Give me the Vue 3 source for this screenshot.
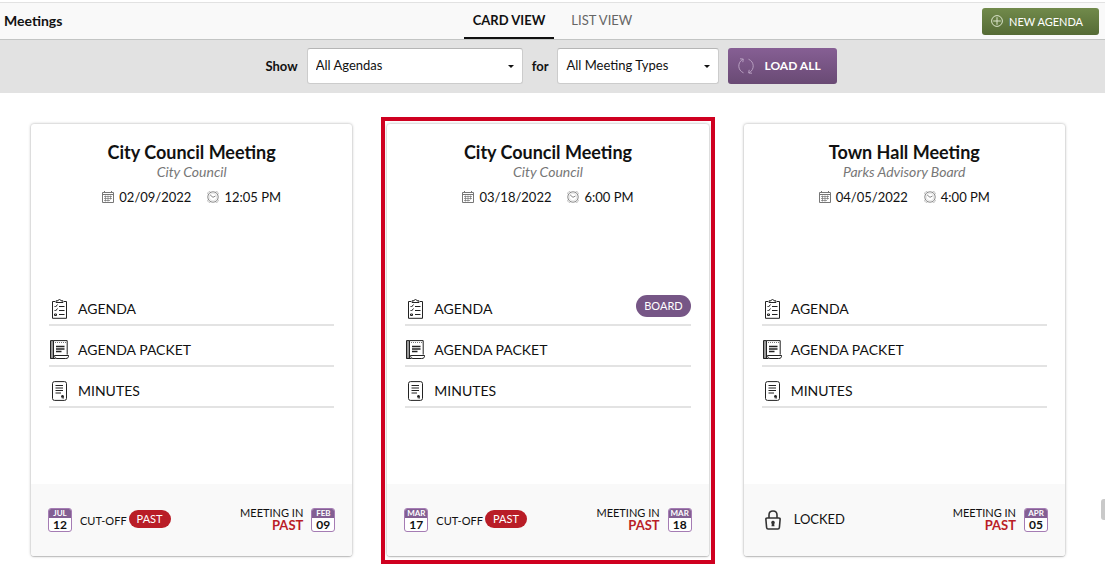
<script setup>
import { ref } from 'vue'

const view = ref('card')
const agendaFilter = ref('All Agendas')
const typeFilter = ref('All Meeting Types')

const cards = [
  { id: 1, title: 'City Council Meeting', group: 'City Council', date: '02/09/2022', time: '12:05 PM', cutoff: { month: 'JUL', day: '12' }, meeting: { month: 'FEB', day: '09' } },
  { id: 2, title: 'City Council Meeting', group: 'City Council', date: '03/18/2022', time: '6:00 PM', board: true, selected: true, cutoff: { month: 'MAR', day: '17' }, meeting: { month: 'MAR', day: '18' } },
  { id: 3, title: 'Town Hall Meeting', group: 'Parks Advisory Board', date: '04/05/2022', time: '4:00 PM', locked: true, meeting: { month: 'APR', day: '05' } },
]
</script>

<template>
  <div class="page">
    <header class="topbar">
      <h1>Meetings</h1>
      <nav class="tabs">
        <button type="button" class="tab" :class="{ active: view === 'card' }" @click="view = 'card'">CARD VIEW</button>
        <button type="button" class="tab" :class="{ active: view === 'list' }" @click="view = 'list'">LIST VIEW</button>
      </nav>
      <div class="actions">
        <button type="button" class="new-agenda">
          <svg width="12" height="12" viewBox="0 0 12 12" fill="none" stroke="#dce5cc">
            <circle cx="6" cy="6" r="5.4" />
            <path d="M6 2.2v7.6M2.2 6h7.6" />
          </svg>
          NEW AGENDA
        </button>
      </div>
    </header>

    <form class="filters" @submit.prevent>
      <label for="agenda-filter">Show</label>
      <span class="select wide">
        <select id="agenda-filter" v-model="agendaFilter"><option>All Agendas</option></select>
        <svg width="6" height="3" viewBox="0 0 6 3"><path d="M0 0h6L3 3z" fill="#111" /></svg>
      </span>
      <label for="type-filter">for</label>
      <span class="select">
        <select id="type-filter" v-model="typeFilter"><option>All Meeting Types</option></select>
        <svg width="6" height="3" viewBox="0 0 6 3"><path d="M0 0h6L3 3z" fill="#111" /></svg>
      </span>
      <button type="submit" class="load-all">
        <svg width="18" height="18" viewBox="0 0 18 18" fill="none" stroke="#b79fc0">
          <path d="M6.500 15.800C.4 13.300.2 5.200 6 2.200M3 1.800l3.300.2-.5 3.200M11.500 2.200c6.100 2.500 6.300 10.600.5 13.600M15 16.200l-3.300-.2.5-3.200" />
        </svg>
        LOAD ALL
      </button>
    </form>

    <main class="cards">
      <article v-for="card in cards" :key="card.id" class="card" :class="{ selected: card.selected }">
        <div class="head">
          <h2>{{ card.title }}</h2>
          <p class="group">{{ card.group }}</p>
          <p class="when">
            <span>
              <svg width="12" height="12" viewBox="0 0 12 12" fill="none" stroke="#777">
                <path d="M.5 1.500h11v10h-11zM.5 3.500h11M2.500 0v2M9.500 0v2" />
                <path d="M2 5.500h8M2 7.500h8M2 9.500h6M3.500 4.500v6M6 4.500v6M8.500 4.500v4" stroke-width=".7" />
              </svg>
              {{ card.date }}
            </span>
            <span>
              <svg width="12" height="12" viewBox="0 0 12 12" fill="none" stroke="#888">
                <circle cx="6" cy="6" r="5.200" />
                <circle cx="6" cy="6" r="3.800" stroke="#ddd" stroke-width=".8" />
                <path d="M3.200 4 6 6.300l2.500-1.300" />
                <path d="M.6 3.200 1 1.600l.8-.8 1.500-.2M11.400 3.200 11 1.600l-.8-.8-1.500-.2M.6 8.800l.4 1.600.8.800 1.500.2M11.400 8.800l-.4 1.600-.8.800-1.500.2" stroke="#bbb" />
              </svg>
              {{ card.time }}
            </span>
          </p>
        </div>

        <ul class="docs">
          <li>
            <a href="#agenda">
              <svg width="20" height="20" viewBox="0 0 20 20" fill="none" stroke="#222">
                <path d="M6 2.500H3.500v16.800h14V2.500H15M7 3.500V1.800h2c.1-1.700 2.900-1.700 3 0h2v1.700z" />
                <path d="M5.500 7l1 1 2-2.500M5.500 11l1 1 2-2.500M5.500 15h2v1.500h-2zM10 7.500h5.500M10 11.500h5.500M10 15.500h5.500" />
              </svg>
              AGENDA
            </a>
            <span v-if="card.board" class="board">BOARD</span>
          </li>
          <li>
            <a href="#packet">
              <svg width="20" height="20" viewBox="0 0 20 20" fill="none" stroke="#222">
                <path d="M1.500.6h3v17.800h-3z" fill="#999" />
                <path d="M4.500.6h13.700v14M1.500 18.500h5M5.500 15.500h14.200c0 2-1 3-3 3H8c-1.600 0-2.500-1.400-2.500-3z" />
                <path d="M6 2.500h11" stroke-dasharray="1 1" stroke="#777" />
                <path d="M7 6.500h8.500M7 9h8.500M7 11.500h5.500" stroke-width="1.400" />
              </svg>
              AGENDA PACKET
            </a>
          </li>
          <li>
            <a href="#minutes">
              <svg width="20" height="20" viewBox="0 0 20 20" fill="none" stroke="#222">
                <rect x="3.500" y=".6" width="14" height="18.800" rx="2" />
                <path d="M6.500 4.500H14M6.500 7H14M6.500 9.500H14M6.500 12H12" />
                <circle cx="13.500" cy="15.200" r="1.300" fill="#222" stroke="none" />
                <path d="M13 15.500v1.800l.7-.5.8.5v-1.800" stroke-width=".7" />
              </svg>
              MINUTES
            </a>
          </li>
        </ul>

        <footer class="foot">
          <div v-if="card.locked" class="locked">
            <svg width="16" height="20" viewBox="0 0 16 20" fill="none" stroke="#333" stroke-width="1.600">
              <path d="M2.200 8h11.600c1 0 1.400.5 1.300 1.500l-.7 8c-.1 1-.6 1.500-1.500 1.500H3.100c-.9 0-1.400-.5-1.500-1.500l-.7-8C.8 8.500 1.200 8 2.200 8zM4 8V5C4 2 5.600 1 8 1s4 1 4 4v3" />
              <path d="M8 10.800a1.900 1.900 0 0 1 1.200 3.300l.3 2.200h-3l.3-2.200A1.900 1.900 0 0 1 8 10.800z" fill="#333" stroke="none" />
            </svg>
            <span>LOCKED</span>
          </div>
          <div v-else class="cutoff">
            <span class="cal"><b>{{ card.cutoff.month }}</b><i>{{ card.cutoff.day }}</i></span>
            <span class="cut-text">CUT-OFF</span>
            <span class="past">PAST</span>
          </div>
          <div class="meeting">
            <p>MEETING IN<strong>PAST</strong></p>
            <span class="cal"><b>{{ card.meeting.month }}</b><i>{{ card.meeting.day }}</i></span>
          </div>
        </footer>
      </article>
    </main>
    <div class="thumb"></div>
  </div>
</template>

<style>
body { background: #fff; }
</style>

<style scoped>
* { box-sizing: border-box; margin: 0; padding: 0; }
.page { position: relative; font-family: Lato, "Open Sans", sans-serif; font-size: 14px; color: #111; padding-top: 2px; }
button, select { font-family: inherit; border: 0; cursor: pointer; }
svg { flex: none; }
.topbar { display: grid; grid-template-columns: 1fr auto 1fr; align-items: center; height: 38px; background: #f9f9f9; border-top: 1px solid #e2e2e2; border-bottom: 1px solid #c3c5c4; }
h1 { font-size: 14px; line-height: 18px; font-weight: 700; padding-left: 4px; }
.tabs { display: flex; gap: 8px; height: 36px; }
.tab { padding: 0 9px; font-size: 13px; background: none; border-bottom: 2px solid transparent; color: #666; }
.tab.active { color: #111; border-color: #111; font-weight: 700; }
.actions { display: flex; justify-content: flex-end; padding-right: 6px; }
.new-agenda { display: flex; align-items: center; gap: 6px; width: 117px; height: 27px; padding: 0 9px; font-size: 11px; color: #fff; border-radius: 3px; background: linear-gradient(#718a4b, #556b35); }
.filters { display: flex; align-items: center; justify-content: center; height: 53px; padding: 0 2px 2px 0; background: #e2e2e2; }
label { font-weight: 700; font-size: 13px; }
.select { position: relative; width: 162px; margin: 0 9px; }
.select.wide { width: 216px; }
.select select { display: block; appearance: none; width: 100%; height: 36px; padding: 0 8px 2px; font-size: 13px; color: #111; background: #fff; border: 1px solid #ccc; border-top-color: #b5b5b5; border-radius: 3px; }
.select svg { position: absolute; right: 9px; top: 17px; pointer-events: none; }
.load-all { display: flex; align-items: center; gap: 9px; width: 109px; height: 36px; padding: 0 9px; font-size: 12px; font-weight: 700; color: #fff; border-radius: 3px; background: linear-gradient(#865f94, #694a74); }
.cards { display: grid; grid-template-columns: repeat(3, 1fr); gap: 35px; padding: 31px 40px 22px 31px; }
.card { position: relative; display: flex; flex-direction: column; border-radius: 3px; background: #fff; box-shadow: 0 0 3px rgba(0, 0, 0, .35), 0 1px 1px rgba(0, 0, 0, .15); }
.card.selected::after { content: ""; position: absolute; inset: -7px -6px -8px -6px; border: 4px solid #cf0020; pointer-events: none; }
.head { height: 163px; padding-top: 16px; text-align: center; }
h2 { font-size: 18px; line-height: 24px; font-weight: 700; }
.group { font-size: 14px; line-height: 16px; font-style: italic; color: #777; }
.when { display: flex; justify-content: center; gap: 16px; margin-top: 8px; line-height: 18px; font-size: 13px; }
.when span { display: flex; align-items: center; gap: 5px; }
.docs { list-style: none; padding: 0 18px; height: 197px; }
.docs li { display: flex; justify-content: space-between; align-items: flex-start; height: 39px; margin-bottom: 2px; border-bottom: 2px solid #e3e3e3; padding-top: 8px; }
.docs a { display: flex; align-items: center; gap: 9px; font-size: 14px; line-height: 20px; color: #111; text-decoration: none; padding-top: 4px; }
.board { height: 22px; line-height: 22px; border-radius: 11px; padding: 0 8px; font-size: 11px; color: #fff; background: #765686; }
.foot { display: flex; justify-content: space-between; align-items: center; height: 72px; padding: 0 17px; background: #f9f9f9; border-radius: 0 0 3px 3px; }
.cutoff, .meeting, .locked { display: flex; align-items: center; }
.cal { display: block; width: 24px; height: 24px; border: 1px solid #a57cb4; border-radius: 3px; background: #fff; text-align: center; overflow: hidden; }
.cal b { display: block; height: 9px; line-height: 9px; font-size: 8px; font-weight: 700; color: #fff; background: #835f93; }
.cal i { display: block; line-height: 13px; font-size: 12px; font-weight: 700; font-style: normal; }
.cut-text { font-size: 11px; margin-left: 8px; }
.past { height: 18px; line-height: 18px; margin: 0 0 2px 2px; padding: 0 8px; border-radius: 9px; font-size: 11px; color: #fff; background: #b91d27; }
.meeting { gap: 8px; }
.meeting p { text-align: right; font-size: 11px; line-height: 12px; padding-bottom: 2px; }
.meeting strong { display: block; font-size: 13px; font-weight: 700; color: #b91d27; }
.locked { gap: 13px; padding-left: 4px; font-size: 13px; }
.locked span { padding-bottom: 2px; }
.thumb { position: absolute; right: 0; top: 499px; width: 4px; height: 21px; border-radius: 3px 0 0 3px; background: #c9c9c9; }
</style>
